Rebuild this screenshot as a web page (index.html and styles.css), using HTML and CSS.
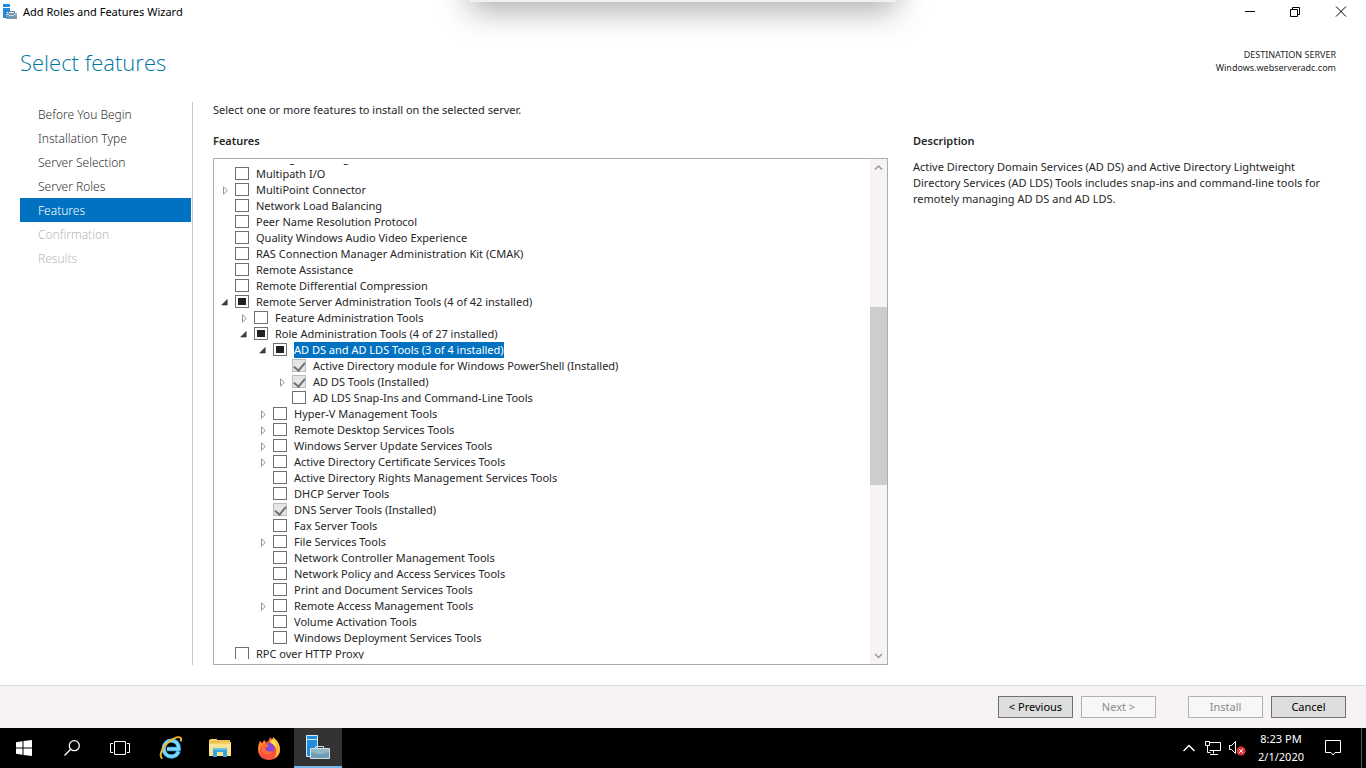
FILE: index.html
```html
<!DOCTYPE html>
<html lang="en">
<head>
<meta charset="utf-8">
<title>Add Roles and Features Wizard</title>
<link rel="stylesheet" href="styles.css">
</head>
<body>
<svg class="sprite" aria-hidden="true">
  <symbol id="closed" viewBox="0 0 9 9"><path d="M2.500 .8v7.400L6.300 4.500z" fill="#fff" stroke="#959595"/></symbol>
  <symbol id="open" viewBox="0 0 9 9"><path d="M6.200 1.500v5.500H.7z" fill="#404040" stroke="#262626" stroke-width=".6"/></symbol>
</svg>

<div class="window">
  <header class="titlebar">
    <svg class="app-icon" viewBox="0 0 16 16" aria-hidden="true">
      <path d="M1 0h7v3H1zM1 4h7v4H5v6H1z" fill="#1f8ade"/>
      <path d="M4 9h11v6H4z" fill="#7099ad"/>
      <path d="M6.500 9V7.500h6V9" fill="none" stroke="#5d8598"/>
      <path d="M4 10.500h3M12 10.500h3M7 11.500h5" stroke="#c9d9e0"/>
    </svg>
    <span class="titlebar-text">Add Roles and Features Wizard</span>
    <div class="window-controls">
      <button type="button" aria-label="Minimize"><svg viewBox="0 0 12 12"><path d="M2 5.500h10" /></svg></button>
      <button type="button" aria-label="Restore"><svg viewBox="0 0 12 12"><path d="M1.500 3.500h7v7h-7zM3.500 3.500v-2h7v7h-2"/></svg></button>
      <button type="button" aria-label="Close"><svg viewBox="0 0 12 12"><path d="M1 .5l10 10M11 .5l-10 10"/></svg></button>
    </div>
  </header>

  <div class="heading">
    <h1>Select features</h1>
    <p class="destination">DESTINATION SERVER<br>Windows.webserveradc.com</p>
  </div>

  <main class="body">
    <nav class="steps" aria-label="Wizard steps">
      <a href="#before">Before You Begin</a>
      <a href="#type">Installation Type</a>
      <a href="#server">Server Selection</a>
      <a href="#roles">Server Roles</a>
      <a href="#features" class="current" aria-current="step">Features</a>
      <a class="disabled" aria-disabled="true">Confirmation</a>
      <a class="disabled" aria-disabled="true">Results</a>
    </nav>

    <section class="features" id="features">
      <p class="intro">Select one or more features to install on the selected server.</p>
      <h2>Features</h2>
      <div class="tree-box">
        <div class="tree-view">
          <ul class="tree">
            <li><div class="row"><label><input type="checkbox">Message Queuing</label></div></li>
            <li><div class="row"><label><input type="checkbox">Multipath I/O</label></div></li>
            <li><div class="row"><button type="button" class="toggle" aria-label="Expand"><svg><use href="#closed"/></svg></button><label><input type="checkbox">MultiPoint Connector</label></div></li>
            <li><div class="row"><label><input type="checkbox">Network Load Balancing</label></div></li>
            <li><div class="row"><label><input type="checkbox">Peer Name Resolution Protocol</label></div></li>
            <li><div class="row"><label><input type="checkbox">Quality Windows Audio Video Experience</label></div></li>
            <li><div class="row"><label><input type="checkbox">RAS Connection Manager Administration Kit (CMAK)</label></div></li>
            <li><div class="row"><label><input type="checkbox">Remote Assistance</label></div></li>
            <li><div class="row"><label><input type="checkbox">Remote Differential Compression</label></div></li>
            <li><div class="row"><button type="button" class="toggle" aria-label="Collapse"><svg><use href="#open"/></svg></button><label><input type="checkbox" class="mixed">Remote Server Administration Tools (4 of 42 installed)</label></div>
              <ul>
                <li><div class="row"><button type="button" class="toggle" aria-label="Expand"><svg><use href="#closed"/></svg></button><label><input type="checkbox">Feature Administration Tools</label></div></li>
                <li><div class="row"><button type="button" class="toggle" aria-label="Collapse"><svg><use href="#open"/></svg></button><label><input type="checkbox" class="mixed">Role Administration Tools (4 of 27 installed)</label></div>
                  <ul>
                    <li><div class="row"><button type="button" class="toggle" aria-label="Collapse"><svg><use href="#open"/></svg></button><label><input type="checkbox" class="mixed"><span class="selected">AD DS and AD LDS Tools (3 of 4 installed)</span></label></div>
                      <ul>
                        <li><div class="row"><label><input type="checkbox" checked disabled>Active Directory module for Windows PowerShell (Installed)</label></div></li>
                        <li><div class="row"><button type="button" class="toggle" aria-label="Expand"><svg><use href="#closed"/></svg></button><label><input type="checkbox" checked disabled>AD DS Tools (Installed)</label></div></li>
                        <li><div class="row"><label><input type="checkbox">AD LDS Snap-Ins and Command-Line Tools</label></div></li>
                      </ul>
                    </li>
                    <li><div class="row"><button type="button" class="toggle" aria-label="Expand"><svg><use href="#closed"/></svg></button><label><input type="checkbox">Hyper-V Management Tools</label></div></li>
                    <li><div class="row"><button type="button" class="toggle" aria-label="Expand"><svg><use href="#closed"/></svg></button><label><input type="checkbox">Remote Desktop Services Tools</label></div></li>
                    <li><div class="row"><button type="button" class="toggle" aria-label="Expand"><svg><use href="#closed"/></svg></button><label><input type="checkbox">Windows Server Update Services Tools</label></div></li>
                    <li><div class="row"><button type="button" class="toggle" aria-label="Expand"><svg><use href="#closed"/></svg></button><label><input type="checkbox">Active Directory Certificate Services Tools</label></div></li>
                    <li><div class="row"><label><input type="checkbox">Active Directory Rights Management Services Tools</label></div></li>
                    <li><div class="row"><label><input type="checkbox">DHCP Server Tools</label></div></li>
                    <li><div class="row"><label><input type="checkbox" checked disabled>DNS Server Tools (Installed)</label></div></li>
                    <li><div class="row"><label><input type="checkbox">Fax Server Tools</label></div></li>
                    <li><div class="row"><button type="button" class="toggle" aria-label="Expand"><svg><use href="#closed"/></svg></button><label><input type="checkbox">File Services Tools</label></div></li>
                    <li><div class="row"><label><input type="checkbox">Network Controller Management Tools</label></div></li>
                    <li><div class="row"><label><input type="checkbox">Network Policy and Access Services Tools</label></div></li>
                    <li><div class="row"><label><input type="checkbox">Print and Document Services Tools</label></div></li>
                    <li><div class="row"><button type="button" class="toggle" aria-label="Expand"><svg><use href="#closed"/></svg></button><label><input type="checkbox">Remote Access Management Tools</label></div></li>
                    <li><div class="row"><label><input type="checkbox">Volume Activation Tools</label></div></li>
                    <li><div class="row"><label><input type="checkbox">Windows Deployment Services Tools</label></div></li>
                  </ul>
                </li>
              </ul>
            </li>
            <li><div class="row"><label><input type="checkbox">RPC over HTTP Proxy</label></div></li>
          </ul>
        </div>
        <div class="scrollbar">
          <button type="button" aria-label="Scroll up"><svg viewBox="0 0 9 9"><path d="M1 6.500L4.500 3 8 6.500"/></svg></button>
          <div class="before-thumb"></div>
          <div class="thumb"></div>
          <div class="after-thumb"></div>
          <button type="button" aria-label="Scroll down"><svg viewBox="0 0 9 9"><path d="M1 3l3.500 3.500L8 3"/></svg></button>
        </div>
      </div>
    </section>

    <aside class="description">
      <h2>Description</h2>
      <p>Active Directory Domain Services (AD DS) and Active Directory Lightweight Directory Services (AD LDS) Tools includes snap-ins and command-line tools for remotely managing AD DS and AD LDS.</p>
    </aside>
  </main>

  <footer class="actions">
    <button type="button">&lt; Previous</button>
    <button type="button" disabled>Next &gt;</button>
    <button type="button" class="apart" disabled>Install</button>
    <button type="button">Cancel</button>
  </footer>

  <div class="session-bar"></div>
</div>

<div class="taskbar">
  <div class="system-buttons">
    <button type="button" aria-label="Start"><svg width="16" height="16" viewBox="0 0 16 16" fill="#fff"><path d="M0 2.200L6.500 1.300v6.200H0zM7.500 1.100L16 0v7.500H7.500zM0 8.500h6.500v6.200L0 13.800zM7.500 8.500H16V16l-8.500-1.100z"/></svg></button>
    <button type="button" aria-label="Search"><svg width="16" height="16" viewBox="0 0 16 16" fill="none" stroke="#fff" stroke-width="1.300"><circle cx="10.300" cy="5.700" r="5"/><path d="M6.700 9.300L.5 15.500"/></svg></button>
    <button type="button" aria-label="Task View"><svg width="20" height="16" viewBox="0 0 20 16" fill="none" stroke="#fff" stroke-width="1"><path d="M4.500 1.500h11v13h-11zM3 3.500H.5v9H3M17 3.500h2.500v9H17"/></svg></button>
  </div>
  <div class="apps">
    <button type="button" aria-label="Internet Explorer"><svg width="24" height="24" viewBox="0 0 24 24" fill="none">
      <path d="M19.500 15.500c-1.300 3.200-4 5-7.200 5-4.300 0-7.500-3.300-7.500-7.800 0-4.700 3.200-8.100 7.600-8.100 4.700 0 7.500 3.400 7.300 8.400H8" stroke="#2d9fdc" stroke-width="4.400"/>
      <path d="M19.500 15.500c-1.300 3.200-4 5-7.200 5-4.300 0-7.500-3.300-7.500-7.800 0-4.700 3.200-8.100 7.600-8.100 4.700 0 7.500 3.400 7.300 8.400H8" stroke="#7ad8fa" stroke-width="3"/>
      <path d="M3.500 22.500C-.5 20.500 2.500 12 9.500 6 15.500 1 21 0 22 2.300c.3.900.1 2-.3 3" stroke="#f3b72c" stroke-width="1.900"/></svg></button>
    <button type="button" aria-label="File Explorer"><svg width="22" height="18" viewBox="0 0 22 18"><path d="M0 1h1V0h7v1h13v2h1v14H0z" fill="#f5ce63"/><path d="M0 5h22v12H0z" fill="#fbe394"/><path d="M1 3h9V2h11" stroke="#e5af3d" fill="none"/><path d="M4 18V9h14v9h-4v-5H8v5z" fill="#3aa5dc"/><path d="M4 9h14v2H4z" fill="#63bfe8"/></svg></button>
    <button type="button" aria-label="Firefox"><svg width="24" height="24" viewBox="0 0 24 24">
      <path d="M3 5l2 2 2-3 1 3c2-1 4-2 5-6 1 1 3 2 3 5l3-2c3 4 4 7 4 10 0 6-5 10-11 10S1 20 1 14c0-4 1-6 2-9z" fill="#f7503d"/>
      <path d="M16 1c4 3 7 7 7 12 0 5-3 8-6 9 3-4 3-9 0-12-2-2-5-3-4-7l2 2z" fill="#ffbb35"/>
      <path d="M3 5l2 3 3-4 1 4c-4 0-6 3-6 7 0 2 1 4 2 5C0 16 1 9 3 5z" fill="#ff8a24"/>
      <circle cx="12.500" cy="12" r="5" fill="#8449d5"/>
      <path d="M5 9c3-2 6-1 7 1-1 1-3 1-4 2 1 4 4 4 8 3-1 3-5 4-8 3-4-1-4-5-3-9z" fill="#ff6a36"/>
      <path d="M15 3c3 2 5 4 5 8-2-3-5-2-6-5z" fill="#ffe14c"/></svg></button>
    <button type="button" class="active" aria-label="Server Manager"><svg width="26" height="26" viewBox="0 0 26 26">
      <path d="M1.500 1.500h11v4h-11zM1.500 5.500h11v17h-11z" fill="#218bdd" stroke="#d5e9f7"/>
      <path d="M5.500 14.500h19v10h-19z" fill="#6e9db2" stroke="#d4e2e8"/>
      <path d="M10.500 14v-1.500h8V14" fill="none" stroke="#d4e2e8"/>
      <path d="M6 15h18v3l-6 2h-6l-6-2z" fill="#94b7c5"/></svg></button>
  </div>
  <div class="tray">
    <button type="button" aria-label="Show hidden icons"><svg width="12" height="8" viewBox="0 0 12 8" stroke-width="1.500"><path d="M.5 7L6 1.500 11.500 7"/></svg></button>
    <button type="button" aria-label="Network"><svg width="16" height="14" viewBox="0 0 16 14"><path d="M4.500 1.500h11v8h-11M.5.500h4v4h-4zM2.500 4.500v7h3M8.500 9.500v3M5 13.500h8"/></svg></button>
    <button type="button" aria-label="Speakers, muted"><svg width="17" height="15" viewBox="0 0 17 15"><path d="M.5 4.500h2l4-4v12l-4-4h-2z"/><circle class="mute-badge" cx="12" cy="10" r="4.500"/><path d="M10 8l4 4M14 8l-4 4"/></svg></button>
    <button type="button" class="clock">8:23 PM<br>2/1/2020</button>
    <button type="button" aria-label="Notifications"><svg width="16" height="16" viewBox="0 0 16 16"><path d="M.5.500h15v12H10l-2 2.500-2-2.500H.5z"/></svg></button>
    <button type="button" class="show-desktop" aria-label="Show desktop"></button>
  </div>
</div>
</body>
</html>
```
FILE: styles.css
```css
* { box-sizing: border-box; }

body {
  margin: 0;
  height: 100vh;
  display: flex;
  flex-direction: column;
  overflow: hidden;
  background: #fff;
  color: #262626;
  font: 11px/16px "Noto Sans", "Open Sans", sans-serif;
}

button {
  display: flex;
  align-items: center;
  justify-content: center;
  margin: 0;
  padding: 0;
  border: 0;
  background: none;
  color: inherit;
  font: inherit;
}

h1, h2, p, ul { margin: 0; padding: 0; }
ul { list-style: none; }
h2 { font-size: 11px; font-weight: 600; line-height: 16px; }

.sprite { position: absolute; width: 0; height: 0; }

.window {
  flex: 1;
  min-height: 0;
  display: flex;
  flex-direction: column;
  position: relative;
}

.session-bar {
  position: absolute;
  top: -58px;
  left: 50%;
  width: 426px;
  height: 60px;
  margin-left: -213px;
  background: #f0f0f0;
  box-shadow: 0 8px 32px rgba(0, 0, 0, .34);
}

.titlebar {
  display: flex;
  align-items: center;
  height: 24px;
  padding-left: 2px;
  color: #000;
}
.app-icon { width: 16px; height: 16px; }
.titlebar-text { margin-left: 5px; }
.window-controls { display: flex; margin-left: auto; height: 20px; padding-right: 2px; }
.window-controls button { width: 46px; }
.window-controls svg { width: 12px; height: 12px; fill: none; stroke: #000; }

.heading {
  display: flex;
  justify-content: space-between;
  align-items: flex-start;
  height: 78px;
  padding: 22px 30px 0 20px;
}
h1 { color: #00779f; font: 300 22px/32px "Open Sans", "Noto Sans", sans-serif; }
.destination { padding-top: 2px; font-size: 9px; line-height: 13px; text-align: right; }

.body {
  flex: 1;
  min-height: 0;
  display: flex;
  padding: 0 30px 20px 20px;
}

.steps {
  flex: none;
  width: 173px;
  padding-right: 1px;
  border-right: 1px solid #c8c8c8;
}
.steps a {
  display: block;
  padding: 3px 0 1px 18px;
  color: #303030;
  font-size: 12px;
  font-weight: 300;
  line-height: 20px;
  text-decoration: none;
}
.steps .current { background: #0072c1; color: #fff; }
.steps .disabled { color: #b8b8b8; }

.features {
  flex: 675 1 0;
  min-width: 0;
  display: flex;
  flex-direction: column;
  margin-left: 20px;
}
.intro { margin-bottom: 15px; }
.features h2 { margin-bottom: 9px; }

.tree-box {
  flex: 1;
  min-height: 0;
  display: flex;
  border: 1px solid #acacac;
}
.tree-view {
  flex: 1;
  min-width: 0;
  margin: 5px 0;
  overflow: hidden;
  display: flex;
  flex-direction: column;
}
.tree { padding-left: 5px; margin-top: -14px; }
.tree ul { padding-left: 19px; }
.row {
  display: flex;
  align-items: center;
  height: 16px;
  padding-left: 16px;
  white-space: nowrap;
}
.toggle { width: 12px; height: 12px; margin: 0 4px 0 -16px; }
.toggle svg { width: 9px; height: 9px; }
.row label { display: flex; align-items: center; gap: 7px; }
.row input {
  appearance: none;
  display: grid;
  place-items: center;
  width: 14px;
  height: 13px;
  margin: 0 0 1px;
  border: 1px solid #707070;
  background: #fff;
}
.row .mixed::before { content: ""; width: 8px; height: 7px; background: #212121; }
.row input:disabled { border-color: #bcbcbc; background: #e6e6e6; }
.row input:checked::before {
  content: "";
  width: 5px;
  height: 9px;
  margin-bottom: 3px;
  border: solid #707070;
  border-width: 0 2px 2px 0;
  transform: rotate(40deg);
}
.selected { background: #0072c1; color: #fff; }

.scrollbar {
  flex: none;
  display: flex;
  flex-direction: column;
  width: 17px;
  background: #f6f2f6;
}
.scrollbar button { height: 17px; }
.scrollbar svg { width: 9px; height: 9px; fill: none; stroke: #999; stroke-width: 1.5; }
.before-thumb { flex: 131; }
.thumb { flex: 178; background: #cdcdcd; }
.after-thumb { flex: 162; }

.description { flex: 423 1 0; margin-left: 25px; padding-top: 31px; }
.description p { margin-top: 10px; }

.actions {
  display: flex;
  justify-content: flex-end;
  gap: 8px;
  padding: 10px 20px;
  border-top: 1px solid #dcdcdc;
  background: #f6f2f6;
}
.actions button {
  width: 75px;
  height: 22px;
  border: 1px solid #707070;
  background: #dddddd;
  color: #000;
}
.actions button:disabled { border-color: #adb2b5; background: #f7f7f7; color: #8a8a8a; }
.actions .apart { margin-left: 24px; }

.taskbar {
  flex: none;
  display: flex;
  height: 40px;
  background: #000;
  color: #fff;
}
.system-buttons, .apps { display: flex; }
.system-buttons button, .apps button { width: 48px; }
.apps { gap: 1px; margin-left: 3px; }
.apps .active { border-bottom: 2px solid #76b9ed; background: #333; }
.tray { display: flex; margin-left: auto; }
.tray svg { fill: none; stroke: #fff; }
.tray .mute-badge { fill: #e33535; stroke: none; }
.tray button { width: 24px; }
.tray .clock { width: 64px; margin-right: 4px; line-height: 18px; }
.tray .clock + button { width: 32px; }
.tray .show-desktop { width: 5px; margin-left: 12px; border-left: 1px solid #555; }
```
